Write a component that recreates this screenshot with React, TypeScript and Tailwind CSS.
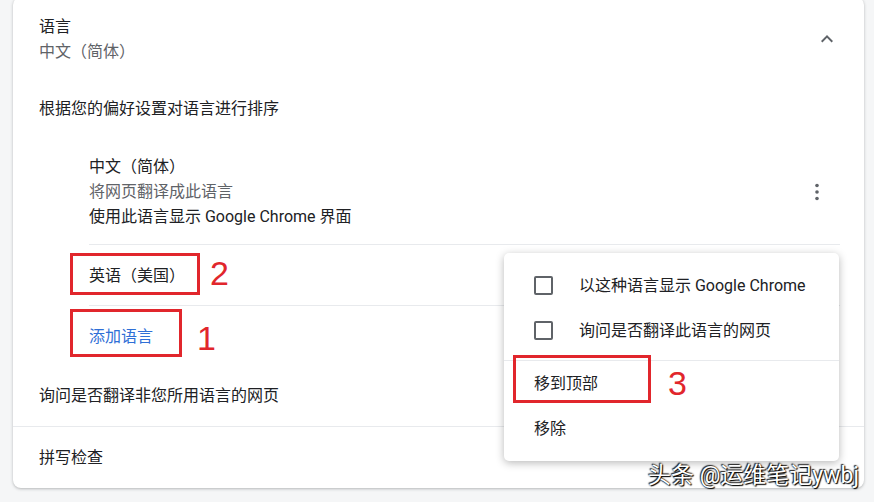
import React from "react";

const font = "font-['Roboto','Noto_Sans_CJK_SC',sans-serif]";

function ChevronUp() {
  return (
    <svg width="24" height="24" viewBox="0 0 24 24" fill="#5f6368">
      <path d="M7.41 15.41L12 10.83l4.59 4.58L18 14l-6-6-6 6z" />
    </svg>
  );
}

function Kebab() {
  return (
    <svg width="24" height="24" viewBox="0 0 24 24" fill="#5f6368">
      <circle cx="12" cy="5.5" r="1.8" />
      <circle cx="12" cy="12" r="1.8" />
      <circle cx="12" cy="18.5" r="1.8" />
    </svg>
  );
}

function Checkbox() {
  return <div className="w-[19px] h-[19px] border-2 border-[#5f6368] rounded-[2px] shrink-0" />;
}

export default function App() {
  return (
    <div className={`relative w-[874px] h-[502px] overflow-hidden bg-[#f5f6f7] ${font} text-[16px] text-[#202124]`}>
      <div className="ml-[13px] mt-[-3px] w-[851px] bg-white rounded-[8px] shadow-[0_1px_3px_rgba(60,64,67,0.35)]">
        <div className="flex items-center justify-between pl-[26px] pr-[25px] pt-[17px] leading-[25px]">
          <div>
            <div>语言</div>
            <div className="text-[#5f6368]">中文（简体）</div>
          </div>
          <ChevronUp />
        </div>
        <div className="mt-[32px] px-[26px] leading-[25px]">根据您的偏好设置对语言进行排序</div>
        <div className="mt-[19px] pl-[76px] pr-[24px] leading-[25px]">
          <div className="flex items-center justify-between pt-[14px] pb-[15px] border-b border-[#e8eaed]">
            <div>
              <div>中文（简体）</div>
              <div className="text-[#5f6368]">将网页翻译成此语言</div>
              <div>使用此语言显示 Google Chrome 界面</div>
            </div>
            <div className="w-[46px] flex justify-center">
              <Kebab />
            </div>
          </div>
          <div className="flex items-center h-[61px] border-b border-[#e8eaed]">英语（美国）</div>
          <div className="flex items-center h-[60px] text-[#2f6fd6]">添加语言</div>
        </div>
        <div className="flex items-center h-[61px] px-[26px] border-b border-[#e8eaed]">询问是否翻译非您所用语言的网页</div>
        <div className="flex items-center h-[61px] px-[26px]">拼写检查</div>
      </div>

      {/* context menu */}
      <div className="absolute left-[504px] top-[253px] w-[335px] h-[208px] bg-white rounded-[5px] shadow-[0_2px_8px_rgba(0,0,0,0.28)] pt-[10px]">
        <div className="flex items-center h-[45px] pl-[30px] gap-[26px]">
          <Checkbox />
          <span>以这种语言显示 Google Chrome</span>
        </div>
        <div className="flex items-center h-[45px] pl-[30px] gap-[26px]">
          <Checkbox />
          <span>询问是否翻译此语言的网页</span>
        </div>
        <div className="mt-[7px] border-t border-[#e8eaed]" />
        <div className="flex items-center h-[45px] pl-[30px]">移到顶部</div>
        <div className="flex items-center h-[45px] pl-[30px]">移除</div>
      </div>

      {/* annotations */}
      <div className="absolute left-[70px] top-[253px] w-[130px] h-[42px] border-[3px] border-[#e1262c]" />
      <div className="absolute left-[70px] top-[309px] w-[112px] h-[48px] border-[3px] border-[#e1262c]" />
      <div className="absolute left-[513px] top-[355px] w-[138px] h-[48px] border-[3px] border-[#e1262c]" />
      <div className="absolute left-[210px] top-[253px] text-[34px] leading-[40px] text-[#e1262c] font-['Liberation_Sans',sans-serif]">2</div>
      <div className="absolute left-[197px] top-[318px] text-[34px] leading-[40px] text-[#e1262c] font-['Liberation_Sans',sans-serif]">1</div>
      <div className="absolute left-[668px] top-[363px] text-[34px] leading-[40px] text-[#e1262c] font-['Liberation_Sans',sans-serif]">3</div>

      {/* watermark */}
      <div className="absolute left-[648px] top-[462px] text-[23px] leading-[28px] text-white [text-shadow:0_0_2px_#000,1px_1px_1px_#000,-1px_-1px_1px_#333]">
        头条 @运维笔记ywbj
      </div>
    </div>
  );
}
